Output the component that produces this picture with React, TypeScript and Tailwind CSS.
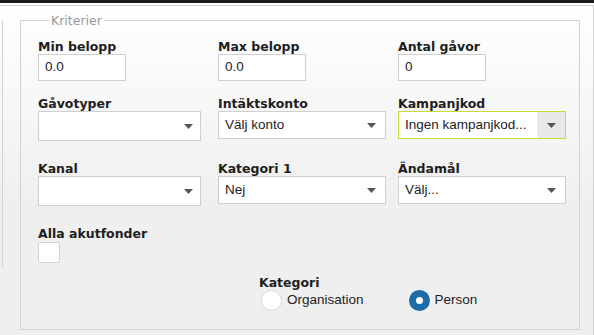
import React from "react";

const labelCls =
  "block h-[15px] text-[12.5px] leading-[15px] font-bold text-[#1e1e1e] font-['DejaVu_Sans',Verdana,sans-serif] whitespace-nowrap";
const valueFont = "font-['Liberation_Sans',Arial,sans-serif] text-[13.5px] text-[#1e1e1e]";

function Arrow() {
  return (
    <svg width="9" height="5" viewBox="0 0 9 5" className="shrink-0">
      <path d="M0 0h9L4.5 5z" fill="#555" />
    </svg>
  );
}

function TextBox({ value }: { value: string }) {
  return (
    <div className={`w-[88px] h-[27px] bg-white border border-[#cfcfcf] flex items-center pl-[6px] ${valueFont}`}>
      {value}
    </div>
  );
}

function Select({ value, wide = true, tall = false }: { value?: string; wide?: boolean; tall?: boolean }) {
  return (
    <div
      className={`${wide ? "w-[168px]" : "w-[163px]"} ${tall ? "h-[30px]" : "h-[28px]"} bg-white border border-[#cfcfcf] flex items-center justify-between pl-[6px] ${wide ? "pr-[9px]" : "pr-[7px]"} ${valueFont}`}
    >
      <span>{value}</span>
      <Arrow />
    </div>
  );
}

function Field({ label, children }: { label: string; children: React.ReactNode }) {
  return (
    <div className="w-[180px]">
      <span className={labelCls}>{label}</span>
      {children}
    </div>
  );
}

export default function App() {
  return (
    <div className="w-[594px] h-[335px] overflow-hidden bg-white">
      <div className="h-[3px] bg-[#1c1c1c]" />
      <div className="h-[2px] bg-white" />
      <div className="h-[330px] flex border-t border-r border-[#d2d2d2] bg-gradient-to-b from-white to-[#efefef] to-60%">
        {/* left neighbour panel edge */}
        <div className="w-[3px] h-[247px] mt-[14px] border-r border-[#d2d2d2] shrink-0" />

        <fieldset className="ml-[17px] mt-[7px] w-[560px] h-[317px] border border-[#d2d2d2] pl-[17px] pt-[11px] shrink-0">
          <legend className="ml-[11px] px-[2px] text-[12.5px] leading-[15px] text-[#9a9a9a] font-['DejaVu_Sans',Verdana,sans-serif]">
            Kriterier
          </legend>

          <div className="flex">
            <Field label="Min belopp">
              <TextBox value="0.0" />
            </Field>
            <Field label="Max belopp">
              <TextBox value="0.0" />
            </Field>
            <Field label="Antal gåvor">
              <TextBox value="0" />
            </Field>
          </div>

          <div className="flex mt-[15px]">
            <Field label="Gåvotyper">
              <Select wide={false} tall />
            </Field>
            <Field label="Intäktskonto">
              <Select value="Välj konto" />
            </Field>
            <Field label="Kampanjkod">
              <div className={`w-[168px] h-[28px] bg-white border border-[#c9da3c] flex items-stretch ${valueFont}`}>
                <span className="flex-1 flex items-center pl-[6px] whitespace-nowrap">Ingen kampanjkod...</span>
                <span className="w-[28px] bg-[#e8e8e8] flex items-center justify-center">
                  <Arrow />
                </span>
              </div>
            </Field>
          </div>

          <div className="flex mt-[20px]">
            <Field label="Kanal">
              <Select wide={false} tall />
            </Field>
            <Field label="Kategori 1">
              <Select value="Nej" />
            </Field>
            <Field label="Ändamål">
              <Select value="Välj..." />
            </Field>
          </div>

          <div className="mt-[20px]">
            <span className={labelCls}>Alla akutfonder</span>
            <div className="mt-[1px] w-[22px] h-[21px] bg-white border border-[#d2d2d2] rounded-[2px]" />
          </div>

          <div className="mt-[12px] ml-[221px]">
            <span className={labelCls}>Kategori</span>
            <div className={`flex items-center ml-[2px] ${valueFont}`}>
              <span className="w-[21px] h-[21px] rounded-full bg-white border border-[#d6d6d6]" />
              <span className="ml-[5px]">Organisation</span>
              <span className="ml-[45px] w-[21px] h-[21px] rounded-full bg-[#1b6ca8] flex items-center justify-center">
                <span className="w-[7px] h-[7px] rounded-full bg-white" />
              </span>
              <span className="ml-[5px]">Person</span>
            </div>
          </div>
        </fieldset>
      </div>
    </div>
  );
}
